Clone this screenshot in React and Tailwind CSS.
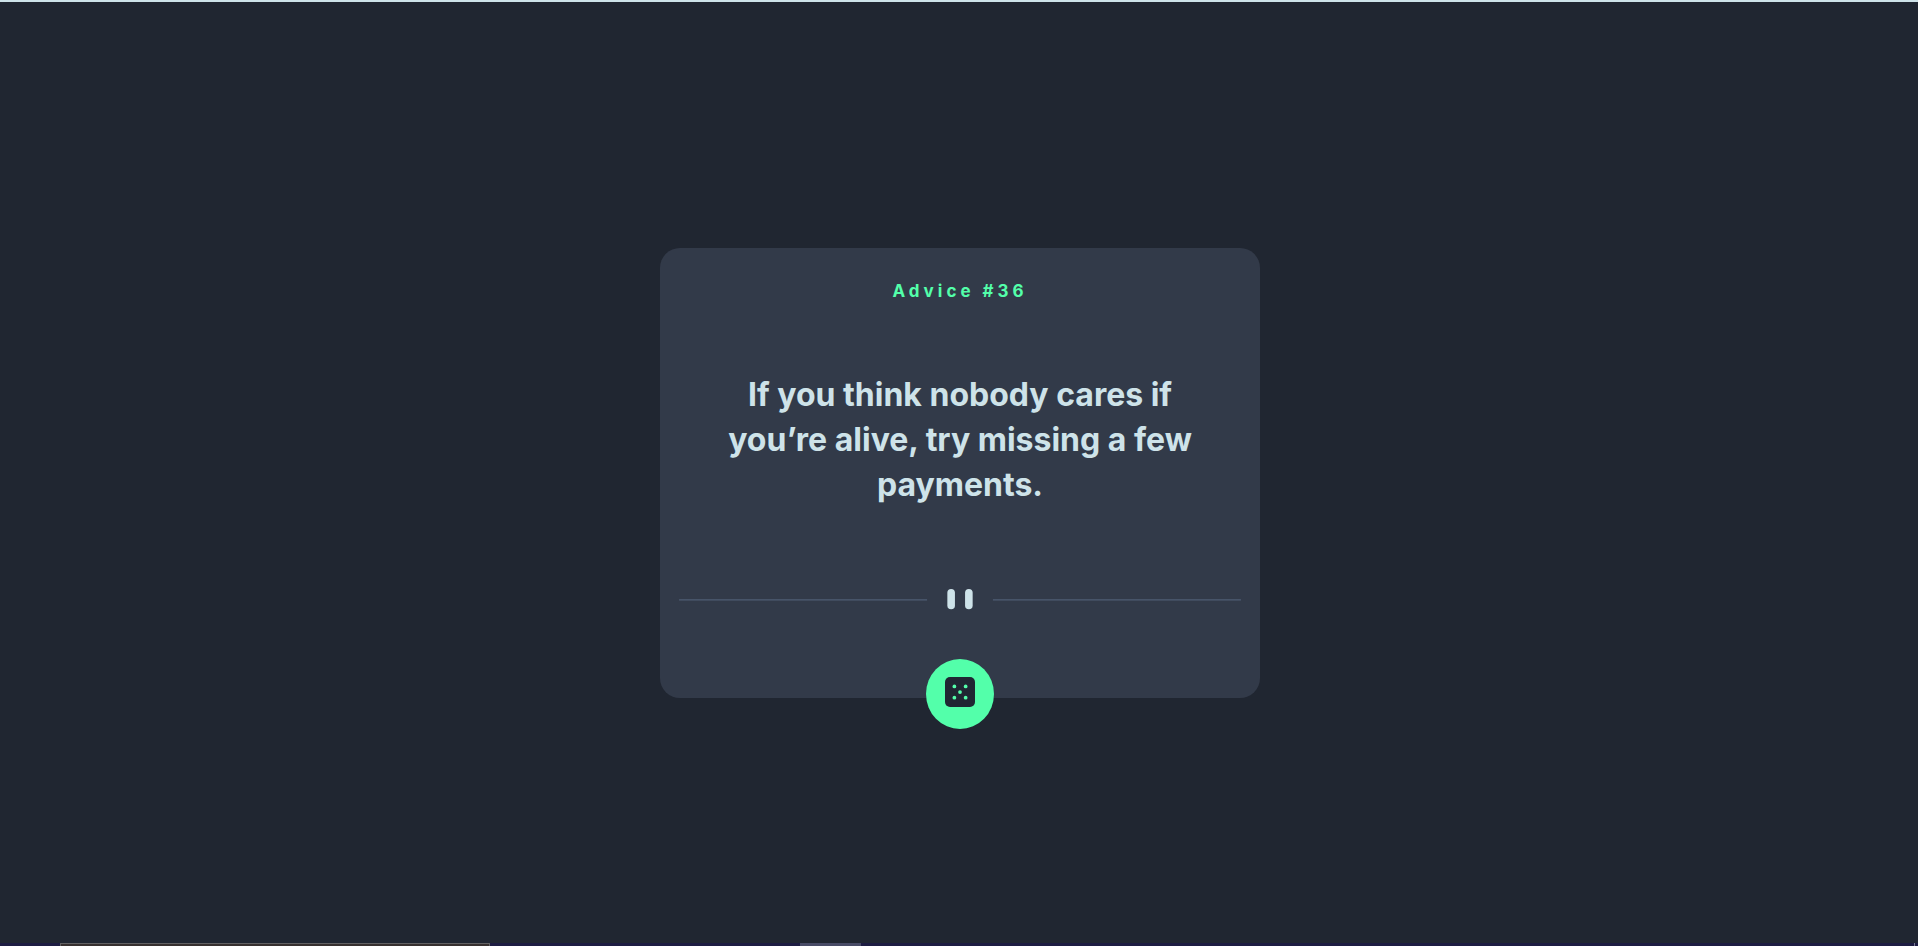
function Divider() {
  return (
    <svg className="block w-full" viewBox="0 0 444 16" aria-hidden="true">
      <path fill="#4F5D74" d="M0 8h196v1H0zM248 8h196v1H248z" />
      <g transform="translate(212)" fill="#CEE3E9">
        <rect width="6" height="16" rx="3" />
        <rect x="14" width="6" height="16" rx="3" />
      </g>
    </svg>
  );
}

function Dice() {
  return (
    <svg className="block size-[30px]" viewBox="0 0 24 24" aria-hidden="true">
      <rect width="24" height="24" rx="4" fill="#202733" />
      <g fill="#53FFAA">
        <circle cx="7.5" cy="7.5" r="1.5" />
        <circle cx="16.5" cy="7.5" r="1.5" />
        <circle cx="12" cy="12" r="1.5" />
        <circle cx="7.5" cy="16.5" r="1.5" />
        <circle cx="16.5" cy="16.5" r="1.5" />
      </g>
    </svg>
  );
}

export default function App() {
  return (
    <div className="flex min-h-screen flex-col border-t-2 border-[#cee3e9] bg-[#202631] font-['Inter',sans-serif]">
      <main className="flex grow items-center justify-center pr-4 pl-[18px]">
        <article className="relative flex min-h-[450px] w-full max-w-[600px] flex-col rounded-[20px] bg-[#323a49] px-[19px] pt-8 pb-[88px] text-center">
          <h1 className="text-[17px] leading-[22px] font-bold tracking-[4px] text-[#53ffaa]">Advice #36</h1>
          <p className="flex grow items-center justify-center px-10 pb-3 text-[32px] leading-[45px] font-bold text-[#cee3e9]">
            If you think nobody cares if you’re alive, try missing a few payments.
          </p>
          <Divider />
          <button
            type="button"
            aria-label="New advice"
            className="absolute -bottom-[31px] left-1/2 flex h-[70px] w-[68px] -translate-x-1/2 cursor-pointer items-center justify-center rounded-[50%] bg-[#53ffaa] pb-1"
          >
            <Dice />
          </button>
        </article>
      </main>
      <footer className="flex h-[3px] bg-[#1d1c42] pl-[60px]">
        <div className="w-[430px] border-x border-t border-[#626163] bg-[#37302f]" />
        <div className="ml-[310px] w-[61px] bg-[#484b66]" />
        <div className="mr-[3px] ml-auto w-px bg-[#777892]" />
      </footer>
    </div>
  );
}
